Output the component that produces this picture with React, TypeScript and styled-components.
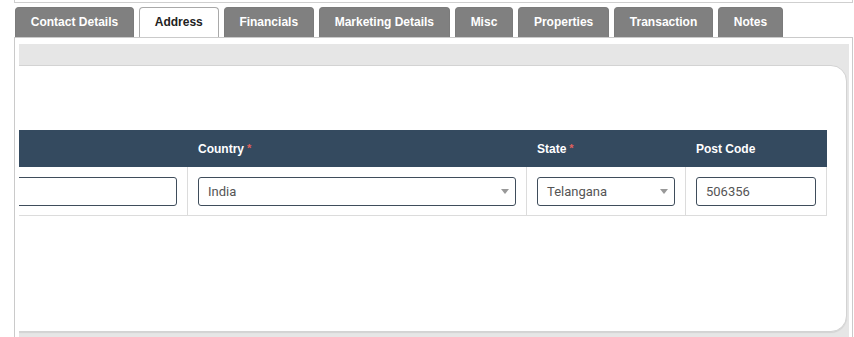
import React from 'react'
import styled, { createGlobalStyle } from 'styled-components'

const GlobalStyle = createGlobalStyle`
  html, body {
    margin: 0;
    padding: 0;
    background: #fff;
    overflow: hidden;
  }
  * { box-sizing: border-box; }
`

const TABS = [
  'Contact Details', 'Address', 'Financials', 'Marketing Details',
  'Misc', 'Properties', 'Transaction', 'Notes'
]

// first column is mostly scrolled out of view, its header shows no label
const COLUMNS = [
  { key: 'city', label: '', width: 260, kind: 'input', value: '' },
  { key: 'country', label: 'Country', width: 339, kind: 'select', value: 'India', required: true },
  { key: 'state', label: 'State', width: 159, kind: 'select', value: 'Telangana', required: true },
  { key: 'post', label: 'Post Code', width: 141, kind: 'input', value: '506356' }
]

const TABLE_WIDTH = COLUMNS.reduce((sum, c) => sum + c.width, 0)

export default function App () {
  const scrollRef = React.useRef<HTMLDivElement>(null)

  // the grid sits scrolled to its right end
  React.useLayoutEffect(() => {
    const el = scrollRef.current
    if (el) el.scrollLeft = el.scrollWidth - el.clientWidth
  }, [])

  return (
    <>
      <GlobalStyle />
      <Page>
        <TopBox />
        <TabBar>
          {TABS.map((t) => (
            <Tab key={t} $active={t === 'Address'}>{t}</Tab>
          ))}
        </TabBar>
        <Panel>
          <Scroller ref={scrollRef}>
            <Band>
              <Card>
                <Grid style={{ width: TABLE_WIDTH }}>
                  <colgroup>
                    {COLUMNS.map((c) => <col key={c.key} style={{ width: c.width }} />)}
                  </colgroup>
                  <thead>
                    <tr>
                      {COLUMNS.map((c) => (
                        <HeadCell key={c.key}>
                          {c.label}
                          {c.required && <Req>*</Req>}
                        </HeadCell>
                      ))}
                    </tr>
                  </thead>
                  <tbody>
                    <tr>
                      {COLUMNS.map((c, i) => (
                        <BodyCell key={c.key} $first={i === 0}>
                          {c.kind === 'select'
                            ? (
                              <SelectBox>
                                <span>{c.value}</span>
                                <Caret />
                              </SelectBox>
                              )
                            : <Field readOnly value={c.value} />}
                        </BodyCell>
                      ))}
                    </tr>
                  </tbody>
                </Grid>
              </Card>
            </Band>
          </Scroller>
        </Panel>
      </Page>
    </>
  )
}

const Page = styled.div`
  width: 854px;
  height: 337px;
  padding: 0 1px 0 14px;
  display: flex;
  flex-direction: column;
  overflow: hidden;
  font-family: "Liberation Sans", Arial, sans-serif;
`

const TopBox = styled.div`
  height: 3px;
  flex: none;
  border: 1px solid #cfcfcf;
  border-top: none;
`

const TabBar = styled.div`
  display: flex;
  gap: 5px;
  margin-top: 4px;
  padding-left: 1px;
  flex: none;
`

const Tab = styled.div<{ $active?: boolean }>`
  height: 30px;
  line-height: 28px;
  padding: 0 14.8px;
  font-size: 12px;
  font-weight: 700;
  white-space: nowrap;
  border: 1px solid ${({ $active }) => $active ? '#a9a9a9' : '#7b7b7b'};
  border-bottom: none;
  border-radius: 4px 4px 0 0;
  color: ${({ $active }) => $active ? '#222' : '#fff'};
  background: ${({ $active }) => $active ? '#fff' : '#808080'};
`

const Panel = styled.div`
  flex: 1;
  min-height: 0;
  border: 1px solid #cacaca;
  border-bottom: none;
  padding: 6px 3px 0 4px;
  overflow: hidden;
`

const Scroller = styled.div`
  height: 100%;
  overflow-x: auto;
  overflow-y: hidden;
  scrollbar-width: none;
  &::-webkit-scrollbar { display: none; }
`

const Band = styled.div`
  display: inline-block;
  width: max-content;
  min-height: 100%;
  background: #e6e6e6;
  padding: 21px 2px 0 20px;
`

const Card = styled.div`
  height: 267px;
  background: #fff;
  border: 1px solid #d3d3d3;
  border-radius: 16px;
  box-shadow: 0 1px 1px rgba(0, 0, 0, 0.08);
  padding: 64px 19px 0 20px;
`

const Grid = styled.table`
  border-collapse: separate;
  border-spacing: 0;
  table-layout: fixed;
`

const HeadCell = styled.th`
  height: 37px;
  padding: 0 10px;
  background: #344a5f;
  color: #fff;
  font-family: "Liberation Sans", Arial, sans-serif;
  font-size: 12px;
  font-weight: 700;
  text-align: left;
  vertical-align: middle;
  white-space: nowrap;
`

const Req = styled.span`
  color: #e0605c;
  font-size: 11px;
  margin-left: 3px;
  position: relative;
  top: -1px;
`

const BodyCell = styled.td<{ $first?: boolean }>`
  padding: 10px 10px 9px;
  border-bottom: 1px solid #dcdcdc;
  border-right: 1px solid #dcdcdc;
  border-left: ${({ $first }) => $first ? '1px solid #dcdcdc' : 'none'};
`

const Field = styled.input`
  display: block;
  width: 100%;
  height: 29px;
  padding: 0 9px;
  border: 1px solid #3f4d5b;
  border-radius: 3px;
  background: #fff;
  font-family: Roboto, "Liberation Sans", sans-serif;
  font-size: 13px;
  color: #555;
  outline: none;
`

const SelectBox = styled.div`
  display: flex;
  align-items: center;
  justify-content: space-between;
  height: 29px;
  padding: 0 6px 0 9px;
  border: 1px solid #3f4d5b;
  border-radius: 3px;
  background: #fff;
  font-family: Roboto, "Liberation Sans", sans-serif;
  font-size: 13px;
  color: #555;
`

const Caret = styled.span`
  width: 0;
  height: 0;
  border-left: 4px solid transparent;
  border-right: 4px solid transparent;
  border-top: 5px solid #999;
`
